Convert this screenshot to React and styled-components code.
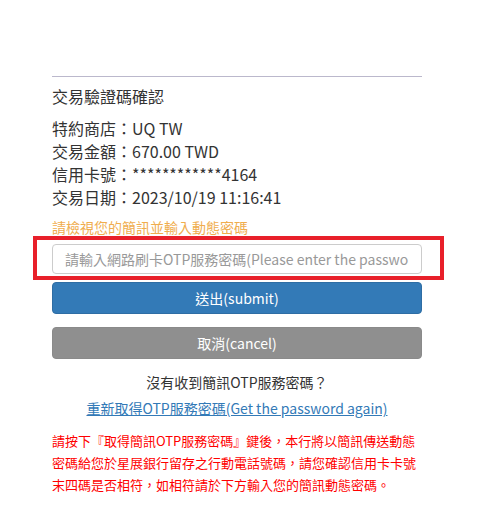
import React from "react";
import styled, { createGlobalStyle } from "styled-components";

const Global = createGlobalStyle`
  html, body { margin: 0; padding: 0; background: #fff; }
  body {
    font-family: "Noto Sans CJK TC", "Noto Sans", sans-serif;
    color: #333;
  }
`;

const Page = styled.div`
  width: 370px;
  margin-left: 52px;
  padding-top: 76px;
`;

const Divider = styled.hr`
  margin: 0;
  border: 0;
  border-top: 1px solid #bbb8cc;
`;

const Title = styled.h2`
  margin: 8px 0 0;
  font-size: 16px;
  font-weight: 400;
  line-height: 22px;
  color: #333;
`;

const InfoList = styled.div`
  margin-top: 10px;
  display: flex;
  flex-direction: column;
`;

const InfoRow = styled.div`
  font-size: 16px;
  line-height: 23px;
  color: #333;
  white-space: nowrap;
`;

const Hint = styled.div`
  margin-top: 8px;
  font-size: 14px;
  line-height: 20px;
  color: #f0ad4e;
`;

const InputWrap = styled.div`
  position: relative;
  margin-top: 7px;
  &::after {
    content: "";
    position: absolute;
    top: -8px;
    bottom: -6px;
    left: -19px;
    right: -22px;
    border: 4px solid #e8202a;
    pointer-events: none;
  }
`;

const Input = styled.input`
  box-sizing: border-box;
  display: block;
  width: 100%;
  height: 30px;
  padding: 0 12px;
  border: 1px solid #ccc;
  border-radius: 4px;
  font-family: inherit;
  font-size: 14px;
  color: #555;
  outline: none;
  &::placeholder { color: #999; }
`;

const Button = styled.button`
  box-sizing: border-box;
  display: block;
  width: 100%;
  height: 32px;
  margin-top: ${(p) => p.$gap}px;
  border: 1px solid ${(p) => p.$border};
  border-radius: 4px;
  background: ${(p) => p.$bg};
  color: #fff;
  font-family: inherit;
  font-size: 14px;
  line-height: 20px;
  cursor: pointer;
`;

const Question = styled.div`
  margin-top: 13px;
  text-align: center;
  font-size: 14px;
  line-height: 20px;
  color: #333;
`;

const LinkRow = styled.div`
  margin-top: 6px;
  text-align: center;
  font-size: 14px;
  line-height: 20px;
`;

const Link = styled.a`
  color: #337ab7;
  text-decoration: underline;
`;

const Notice = styled.p`
  margin: 12px 0 0;
  font-size: 13px;
  line-height: 22px;
  color: #ff0000;
`;

export default function App() {
  return (
    <>
      <Global />
      <Page>
        <Divider />
        <Title>交易驗證碼確認</Title>
        <InfoList>
          <InfoRow>特約商店：UQ TW</InfoRow>
          <InfoRow>交易金額：670.00 TWD</InfoRow>
          <InfoRow>信用卡號：************4164</InfoRow>
          <InfoRow>交易日期：2023/10/19 11:16:41</InfoRow>
        </InfoList>
        <Hint>請檢視您的簡訊並輸入動態密碼</Hint>
        <InputWrap>
          <Input placeholder="請輸入網路刷卡OTP服務密碼(Please enter the password)" />
        </InputWrap>
        <Button $gap={8} $bg="#337ab7" $border="#2e6da4">送出(submit)</Button>
        <Button $gap={13} $bg="#8f8f8f" $border="#8a8a8a">取消(cancel)</Button>
        <Question>沒有收到簡訊OTP服務密碼？</Question>
        <LinkRow>
          <Link href="#">重新取得OTP服務密碼(Get the password again)</Link>
        </LinkRow>
        <Notice>
          請按下『取得簡訊OTP服務密碼』鍵後，本行將以簡訊傳送動態密碼給您於星展銀行留存之行動電話號碼，請您確認信用卡卡號末四碼是否相符，如相符請於下方輸入您的簡訊動態密碼。
        </Notice>
      </Page>
    </>
  );
}
